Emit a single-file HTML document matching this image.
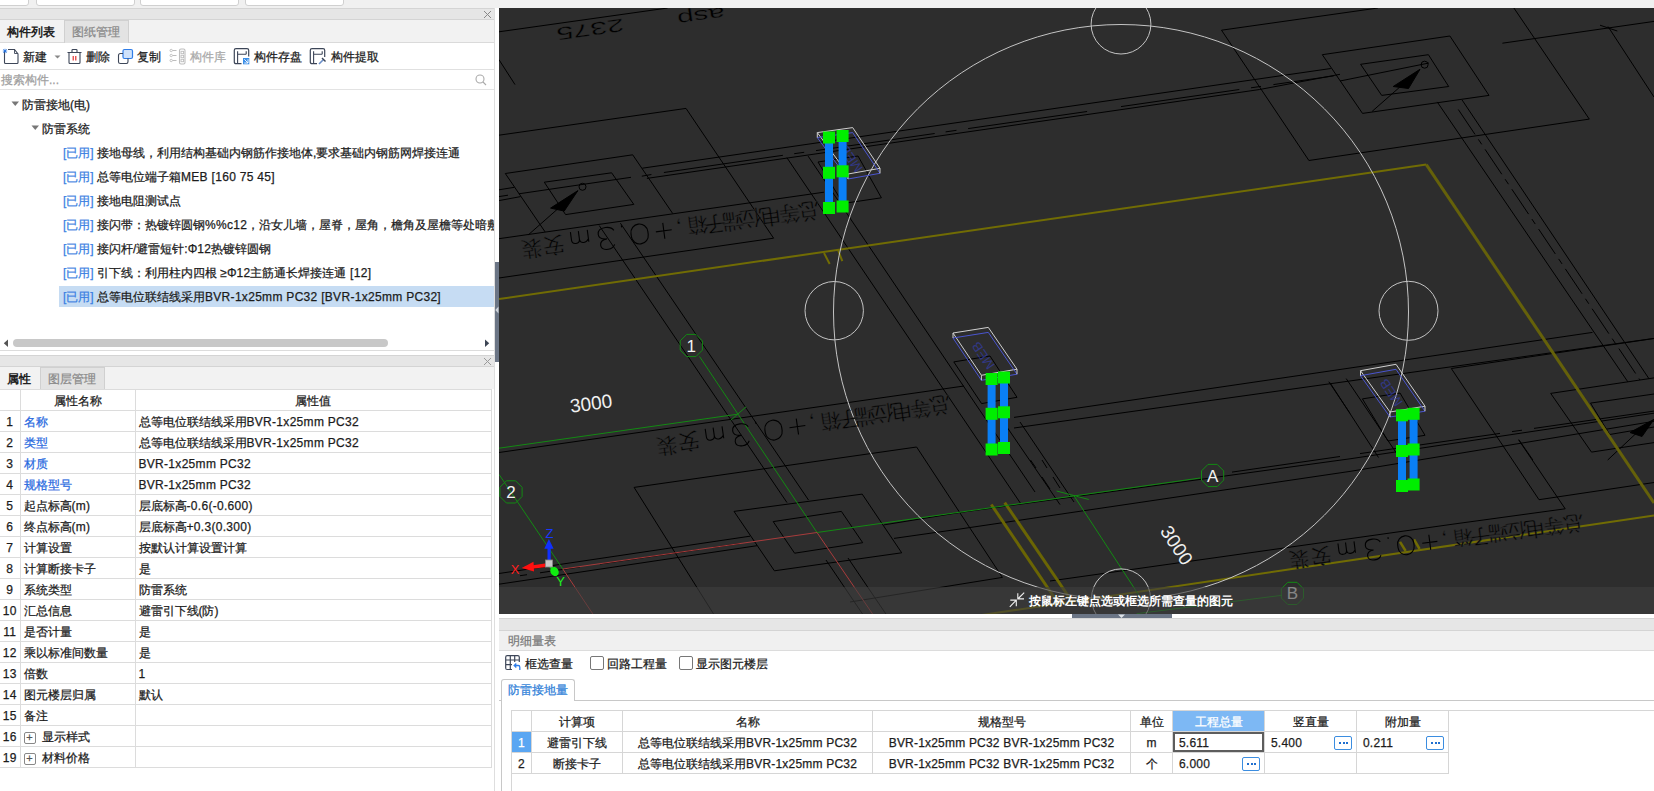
<!DOCTYPE html>
<html><head><meta charset="utf-8">
<style>
*{margin:0;padding:0;box-sizing:border-box}
html,body{width:1654px;height:791px;overflow:hidden;background:#f0f0f0;font-family:"Liberation Sans",sans-serif;font-size:12px;color:#1c1c1c}
.a{position:absolute}
.t{position:absolute;white-space:nowrap;line-height:14px;-webkit-text-stroke:0.25px currentColor}
#props td,#qty td{-webkit-text-stroke:0.25px currentColor}
.hbar{position:absolute;background:#e6e6e6;border-top:1px solid #d4d4d4;border-bottom:1px solid #d4d4d4}
.x{position:absolute;width:9px;height:9px}
.blue{color:#3a7fe2}
.gray{color:#999}
table{border-collapse:collapse;table-layout:fixed}
#props td{border:1px solid #dcdcdc;height:21px;padding:1px 0 0 3px;white-space:nowrap;overflow:hidden;font-size:12px;color:#1c1c1c;line-height:19px}
#qty td{border:1px solid #d6d6d6;height:21px;padding:1px 0 0 0;white-space:nowrap;overflow:hidden;font-size:12px;color:#1c1c1c;line-height:19px;text-align:center}
.dots{position:absolute;width:18px;height:14px;border:1px solid #3b8de0;border-radius:2px;background:#fff}
.dots i{position:absolute;top:5px;width:2px;height:2px;background:#1f6fd0}
.plus{position:absolute;margin-left:0;margin-top:4px;width:12px;height:12px;border:1px solid #888;border-radius:2px;font-size:11px;line-height:9px;text-align:center;color:#555}
#qty td.l{text-align:left;padding-left:6px;position:relative}
#qty td.l .dots{margin-top:0.5px}
#qty td.hsel{background:#7db8f4;color:#fff}
#qty td.nsel{background:#5aa6f2;color:#fff}
#qty td.cur{box-shadow:inset 0 0 0 2px #5d5d5d}
#props td.blue{color:#2a6ae0}
#props tr td:first-child{text-align:center;padding:1px 0 0 0;border-left:none}
.lt{letter-spacing:0.3px}
#props td,#qty td{padding-top:2px!important;line-height:18px!important}
#qty .lt{letter-spacing:0.2px}
</style></head><body>
<!-- top strip -->
<div class="a" style="left:0;top:0;width:1654px;height:8px;background:#f0f0f0"></div>
<div class="a" style="left:-4px;top:-5px;width:33px;height:11px;background:#fff;border:1px solid #d0d0d0;border-radius:3px"></div>
<div class="a" style="left:36px;top:-5px;width:99px;height:11px;background:#fff;border:1px solid #d0d0d0;border-radius:3px"></div>
<div class="a" style="left:140px;top:-5px;width:99px;height:11px;background:#fff;border:1px solid #d0d0d0;border-radius:3px"></div>
<div class="a" style="left:245px;top:-5px;width:99px;height:11px;background:#fff;border:1px solid #d0d0d0;border-radius:3px"></div>

<!-- LEFT PANEL TOP -->
<div class="hbar" style="left:0;top:8px;width:494px;height:12px"></div>
<svg class="x" style="left:483px;top:10px" viewBox="0 0 9 9"><path d="M1 1L8 8M8 1L1 8" stroke="#888" stroke-width="1"/></svg>
<div class="a" style="left:0;top:20px;width:494px;height:23px;background:#f2f2f2;border-bottom:1px solid #dadada"></div>
<div class="t" style="left:7px;top:25px;font-weight:bold;color:#222;-webkit-text-stroke:0">构件列表</div>
<div class="a" style="left:64px;top:20px;width:65px;height:23px;background:#e3e3e3;border:1px solid #d0d0d0;border-bottom:none"></div>
<div class="t gray" style="left:72px;top:25px;color:#8a8a8a">图纸管理</div>
<!-- toolbar -->
<div class="a" style="left:0;top:43px;width:494px;height:27px;background:#fff;border-bottom:1px solid #e0e0e0;border-radius:0 0 0 0"></div>
<div class="t" style="left:23px;top:50px">新建</div>
<div class="t" style="left:86px;top:50px">删除</div>
<div class="t" style="left:137px;top:50px">复制</div>
<div class="t" style="left:190px;top:50px;color:#aaa">构件库</div>
<div class="t" style="left:254px;top:50px">构件存盘</div>
<div class="t" style="left:331px;top:50px">构件提取</div>
<!-- search -->
<div class="a" style="left:0;top:70px;width:494px;height:20px;background:#fff;border-bottom:1px solid #e3e3e3"></div>
<div class="t" style="left:1px;top:73px;color:#a0a0a0">搜索构件...</div>
<!-- tree -->
<div class="a" style="left:0;top:90px;width:494px;height:261px;background:#fff;border-bottom:1px solid #dcdcdc"></div>
<div class="a" style="left:59px;top:286px;width:435px;height:21px;background:#c6dcf3"></div>
<div class="t" style="left:22px;top:98px">防雷接地(电)</div>
<div class="t" style="left:42px;top:122px">防雷系统</div>
<div class="t" style="left:63px;top:146px"><span class="blue">[已用]</span> 接地母线，利用结构基础内钢筋作接地体,要求基础内钢筋网焊接连通</div>
<div class="t" style="left:63px;top:170px"><span class="blue">[已用]</span> 总等电位端子箱<span class="lt">MEB [160 75 45]</span></div>
<div class="t" style="left:63px;top:194px"><span class="blue">[已用]</span> 接地电阻测试点</div>
<div class="t" style="left:63px;top:218px"><span class="blue">[已用]</span> 接闪带：热镀锌圆钢<span class="lt">%%c12</span>，沿女儿墙，屋脊，屋角，檐角及屋檐等处暗敷</div>
<div class="t" style="left:63px;top:242px"><span class="blue">[已用]</span> 接闪杆/避雷短针:Φ<span class="lt">12</span>热镀锌圆钢</div>
<div class="t" style="left:63px;top:266px"><span class="blue">[已用]</span> 引下线：利用柱内四根 ≥Φ<span class="lt">12</span>主筋通长焊接连通<span class="lt"> [12]</span></div>
<div class="t" style="left:63px;top:290px"><span class="blue">[已用]</span> 总等电位联结线采用<span class="lt">BVR-1x25mm PC32 [BVR-1x25mm PC32]</span></div>
<!-- h scrollbar -->
<div class="a" style="left:13px;top:339px;width:375px;height:8px;background:#c8c8c8;border-radius:4px"></div>

<!-- LEFT PANEL BOTTOM -->
<div class="a" style="left:0;top:351px;width:494px;height:4px;background:#fff"></div>
<div class="hbar" style="left:0;top:355px;width:494px;height:12px"></div>
<svg class="x" style="left:483px;top:357px" viewBox="0 0 9 9"><path d="M1 1L8 8M8 1L1 8" stroke="#999" stroke-width="1"/></svg>
<div class="a" style="left:0;top:367px;width:494px;height:23px;background:#f2f2f2;border-bottom:1px solid #dadada"></div>
<div class="t" style="left:7px;top:372px;font-weight:bold;color:#222;-webkit-text-stroke:0">属性</div>
<div class="a" style="left:40px;top:367px;width:65px;height:22px;background:#e3e3e3;border:1px solid #d0d0d0;border-bottom:none"></div>
<div class="t" style="left:48px;top:372px;color:#8a8a8a">图层管理</div>
<div class="a" style="left:0;top:389px;width:494px;height:402px;background:#fff"></div>

<table id="props" class="a" style="left:0;top:389px;width:491px"><colgroup><col style="width:20px"><col style="width:115px"><col style="width:356px"></colgroup><tr><td></td><td style="text-align:center;padding:1px 0 0 0">属性名称</td><td style="text-align:center;padding:1px 0 0 0">属性值</td></tr><tr><td><span class="lt">1</span></td><td class="blue">名称</td><td>总等电位联结线采用<span class="lt">BVR-1x25mm PC32</span></td></tr><tr><td><span class="lt">2</span></td><td class="blue">类型</td><td>总等电位联结线采用<span class="lt">BVR-1x25mm PC32</span></td></tr><tr><td><span class="lt">3</span></td><td class="blue">材质</td><td><span class="lt">BVR-1x25mm PC32</span></td></tr><tr><td><span class="lt">4</span></td><td class="blue">规格型号</td><td><span class="lt">BVR-1x25mm PC32</span></td></tr><tr><td><span class="lt">5</span></td><td>起点标高<span class="lt">(m)</span></td><td>层底标高<span class="lt">-0.6(-0.600)</span></td></tr><tr><td><span class="lt">6</span></td><td>终点标高<span class="lt">(m)</span></td><td>层底标高<span class="lt">+0.3(0.300)</span></td></tr><tr><td><span class="lt">7</span></td><td>计算设置</td><td>按默认计算设置计算</td></tr><tr><td><span class="lt">8</span></td><td>计算断接卡子</td><td>是</td></tr><tr><td><span class="lt">9</span></td><td>系统类型</td><td>防雷系统</td></tr><tr><td><span class="lt">10</span></td><td>汇总信息</td><td>避雷引下线(防)</td></tr><tr><td><span class="lt">11</span></td><td>是否计量</td><td>是</td></tr><tr><td><span class="lt">12</span></td><td>乘以标准间数量</td><td>是</td></tr><tr><td><span class="lt">13</span></td><td>倍数</td><td><span class="lt">1</span></td></tr><tr><td><span class="lt">14</span></td><td>图元楼层归属</td><td>默认</td></tr><tr><td><span class="lt">15</span></td><td>备注</td><td></td></tr><tr><td><span class="lt">16</span></td><td><span class="plus">+</span><span style="margin-left:18px">显示样式</span></td><td></td></tr><tr><td><span class="lt">19</span></td><td><span class="plus">+</span><span style="margin-left:18px">材料价格</span></td><td></td></tr></table>
<!-- splitter -->
<div class="a" style="left:494px;top:8px;width:5px;height:783px;background:#fff;border-left:1px solid #dedede"></div>
<div class="a" style="left:495px;top:262px;width:4px;height:100px;background:#6b7585"></div>

<!-- VIEWPORT -->
<div class="a" id="vp" style="left:499px;top:8px;width:1155px;height:606px;background:#2d2d2d;overflow:hidden"></div>
<!--CAD--><svg class="a" style="left:0;top:0" width="1654" height="791" viewBox="0 0 1654 791"><defs><clipPath id="vc"><rect x="499" y="8" width="1155" height="606"/></clipPath></defs><g clip-path="url(#vc)" font-family="Liberation Sans, sans-serif"><line x1="499.0" y1="31.8" x2="667.6" y2="8.0" stroke="#000000" stroke-width="1" />
<line x1="499.0" y1="59.7" x2="515.0" y2="84.6" stroke="#000000" stroke-width="1" />
<polyline points="499.0,135.2 686.0,108.4 773.6,238.2" stroke="#000000" stroke-width="1" fill="none" />
<polyline points="545.1,231.9 505.3,173.5 632.7,154.8 672.7,213.5" stroke="#000000" stroke-width="1" fill="none" />
<polygon points="544.3,182.2 611.6,172.8 633.8,204.4 565.6,214.6" stroke="#000000" stroke-width="1" fill="none" />
<line x1="528.6" y1="234.6" x2="578.0" y2="191.0" stroke="#000000" stroke-width="1" />
<polygon points="550.6,208.1 577.9,190.6 564.2,211.1" stroke="#000000" stroke-width="1" fill="#000000" />
<circle cx="582.5" cy="186.8" r="3.5" stroke="#000000" stroke-width="1" fill="none"/>
<line x1="499.0" y1="189.8" x2="514.4" y2="187.3" stroke="#000000" stroke-width="1" />
<line x1="642.3" y1="168.2" x2="1330.8" y2="68.5" stroke="#000000" stroke-width="1" />
<line x1="499.0" y1="200.6" x2="520.6" y2="196.6" stroke="#000000" stroke-width="1" />
<polyline points="646.9,178.4 1100.0,112.7 1259.7,89.5 1340.0,74.3" stroke="#000000" stroke-width="1" fill="none" />
<line x1="518.9" y1="193.8" x2="631.0" y2="177.3" stroke="#000000" stroke-width="1" />
<line x1="641.8" y1="176.2" x2="651.4" y2="174.5" stroke="#000000" stroke-width="1" />
<line x1="499.0" y1="196.6" x2="508.0" y2="195.2" stroke="#000000" stroke-width="1" />
<line x1="663.9" y1="172.5" x2="782.9" y2="155.3" stroke="#000000" stroke-width="1" />
<line x1="794.2" y1="153.7" x2="804.2" y2="152.3" stroke="#000000" stroke-width="1" />
<line x1="816.0" y1="150.6" x2="934.7" y2="133.5" stroke="#000000" stroke-width="1" />
<line x1="945.6" y1="131.9" x2="956.5" y2="130.3" stroke="#000000" stroke-width="1" />
<line x1="968.1" y1="128.6" x2="1087.1" y2="111.5" stroke="#000000" stroke-width="1" />
<line x1="1121.0" y1="106.6" x2="1239.3" y2="89.5" stroke="#000000" stroke-width="1" />
<line x1="1251.0" y1="87.8" x2="1261.0" y2="86.4" stroke="#000000" stroke-width="1" />
<line x1="1273.4" y1="84.6" x2="1333.7" y2="75.9" stroke="#000000" stroke-width="1" />
<line x1="499.0" y1="238.7" x2="824.0" y2="192.2" stroke="#000000" stroke-width="1" />
<line x1="499.0" y1="278.0" x2="773.6" y2="238.2" stroke="#000000" stroke-width="1" />
<polygon points="818.0,162.0 858.0,156.0 881.4,197.8 843.0,203.5" stroke="#000000" stroke-width="1" fill="none" />
<line x1="786.9" y1="157.7" x2="1020.7" y2="503.6" stroke="#000000" stroke-width="1" />
<line x1="808.1" y1="156.1" x2="1035.0" y2="492.0" stroke="#000000" stroke-width="1" />
<line x1="1006.0" y1="425.7" x2="1060.0" y2="504.6" stroke="#000000" stroke-width="1" />
<line x1="1020.0" y1="422.0" x2="1074.0" y2="502.0" stroke="#000000" stroke-width="1" />
<line x1="1030.5" y1="460.0" x2="1036.0" y2="468.0" stroke="#000000" stroke-width="1" />
<line x1="1042.0" y1="477.0" x2="1050.0" y2="489.0" stroke="#000000" stroke-width="1" />
<line x1="1042.0" y1="460.0" x2="1047.0" y2="468.0" stroke="#000000" stroke-width="1" />
<line x1="1053.0" y1="477.0" x2="1060.0" y2="488.0" stroke="#000000" stroke-width="1" />
<line x1="599.2" y1="225.5" x2="787.0" y2="502.6" stroke="#000000" stroke-width="1" />
<line x1="620.4" y1="223.2" x2="808.5" y2="500.0" stroke="#000000" stroke-width="1" />
<line x1="499.0" y1="452.5" x2="964.0" y2="386.0" stroke="#000000" stroke-width="1" />
<polyline points="713.6,614.0 634.1,487.4 916.6,447.0 1002.4,577.4 850.0,602.0" stroke="#000000" stroke-width="1" fill="none" />
<polygon points="734.0,511.4 862.2,494.1 901.7,552.8 774.4,570.8" stroke="#000000" stroke-width="1" fill="none" />
<polygon points="773.2,521.6 841.4,511.4 862.7,542.7 794.6,553.2" stroke="#000000" stroke-width="1" fill="none" />
<line x1="499.0" y1="573.5" x2="750.0" y2="536.2" stroke="#000000" stroke-width="1" />
<polyline points="883.9,524.9 960.0,512.5 1350.0,458.8 1654.0,413.2" stroke="#000000" stroke-width="1" fill="none" />
<line x1="499.0" y1="584.2" x2="757.0" y2="545.7" stroke="#000000" stroke-width="1" />
<polyline points="894.0,538.4 960.0,529.0 1350.0,471.4 1654.0,421.3" stroke="#000000" stroke-width="1" fill="none" />
<line x1="520.0" y1="575.7" x2="527.0" y2="574.7" stroke="#000000" stroke-width="1" />
<line x1="540.0" y1="572.8" x2="580.0" y2="566.9" stroke="#000000" stroke-width="1" />
<line x1="600.0" y1="564.0" x2="700.0" y2="549.4" stroke="#000000" stroke-width="1" />
<line x1="712.0" y1="547.6" x2="740.0" y2="543.5" stroke="#000000" stroke-width="1" />
<line x1="1232.0" y1="472.1" x2="1340.0" y2="456.5" stroke="#000000" stroke-width="1" />
<line x1="1360.0" y1="453.6" x2="1500.0" y2="433.4" stroke="#000000" stroke-width="1" />
<line x1="1512.0" y1="431.6" x2="1522.0" y2="430.2" stroke="#000000" stroke-width="1" />
<line x1="1534.0" y1="428.4" x2="1654.0" y2="411.1" stroke="#000000" stroke-width="1" />
<line x1="826.0" y1="560.0" x2="870.0" y2="625.0" stroke="#000000" stroke-width="1" />
<line x1="848.0" y1="558.0" x2="892.0" y2="623.0" stroke="#000000" stroke-width="1" />
<line x1="1014.0" y1="417.4" x2="1592.5" y2="332.4" stroke="#000000" stroke-width="1" />
<line x1="1014.0" y1="428.0" x2="1654.0" y2="338.4" stroke="#000000" stroke-width="1" />
<line x1="1330.0" y1="382.7" x2="1378.5" y2="457.5" stroke="#000000" stroke-width="1" />
<line x1="1346.2" y1="378.6" x2="1396.7" y2="453.5" stroke="#000000" stroke-width="1" />
<line x1="1451.3" y1="368.5" x2="1539.0" y2="499.7" stroke="#000000" stroke-width="1" />
<polyline points="1451.3,368.5 1654.0,338.5" stroke="#000000" stroke-width="1" fill="none" />
<polyline points="1539.0,499.7 1654.0,482.5" stroke="#000000" stroke-width="1" fill="none" />
<polyline points="1518.7,440.0 1565.2,508.8 1454.0,524.0 1050.0,581.0" stroke="#000000" stroke-width="1" fill="none" />
<line x1="1328.8" y1="381.7" x2="1350.0" y2="413.3" stroke="#000000" stroke-width="1" />
<polyline points="1377.9,8.0 1221.5,30.2 1308.9,160.5 1589.3,119.1 1513.9,8.0" stroke="#000000" stroke-width="1" fill="none" />
<polygon points="1322.3,54.7 1449.9,36.0 1489.0,95.4 1362.5,113.4" stroke="#000000" stroke-width="1" fill="none" />
<polygon points="1360.6,64.3 1428.4,54.7 1448.7,86.5 1381.7,95.4" stroke="#000000" stroke-width="1" fill="none" />
<line x1="1372.1" y1="111.4" x2="1420.0" y2="69.3" stroke="#000000" stroke-width="1" />
<polygon points="1393.2,86.5 1420.0,69.3 1408.5,88.5" stroke="#000000" stroke-width="1" fill="#000000" />
<circle cx="1424.6" cy="64.7" r="3.5" stroke="#000000" stroke-width="1" fill="none"/>
<line x1="1340.0" y1="81.0" x2="1429.0" y2="63.0" stroke="#000000" stroke-width="1" />
<line x1="1437.2" y1="101.9" x2="1627.9" y2="381.9" stroke="#000000" stroke-width="1" />
<line x1="1462.1" y1="100.0" x2="1649.1" y2="378.9" stroke="#000000" stroke-width="1" />
<line x1="1458.3" y1="109.5" x2="1640.0" y2="380.0" stroke="#000000" stroke-width="1" stroke-dasharray="30 6 6 6"/>
<line x1="1502.4" y1="43.2" x2="1654.0" y2="21.4" stroke="#000000" stroke-width="1" />
<line x1="1608.0" y1="26.5" x2="1654.0" y2="97.0" stroke="#000000" stroke-width="1" />
<line x1="1600.0" y1="25.2" x2="1617.3" y2="31.0" stroke="#000000" stroke-width="1" />
<polyline points="1654.0,377.9 1550.7,393.4 1591.5,452.1 1654.0,442.6" stroke="#000000" stroke-width="1" fill="none" />
<polyline points="1654.0,394.0 1590.5,403.1 1609.7,434.5 1654.0,427.0" stroke="#000000" stroke-width="1" fill="none" />
<line x1="1607.7" y1="460.0" x2="1636.0" y2="433.5" stroke="#000000" stroke-width="1" />
<polygon points="1630.0,432.5 1654.0,419.3 1642.0,436.5" stroke="#000000" stroke-width="1" fill="#000000" />
<line x1="1518.7" y1="439.5" x2="1532.9" y2="460.0" stroke="#000000" stroke-width="1" />
<polygon points="953.8,361.9 990.0,356.0 1017.0,397.3 981.6,403.6" stroke="#000000" stroke-width="1" fill="none" />
<polygon points="1362.4,398.9 1400.0,393.0 1425.0,435.3 1388.0,441.0" stroke="#000000" stroke-width="1" fill="none" />
<line x1="499.0" y1="299.0" x2="1426.3" y2="164.6" stroke="#716c04" stroke-width="2" />
<line x1="1426.3" y1="164.6" x2="1654.0" y2="502.9" stroke="#65610a" stroke-width="3" />
<line x1="975.0" y1="616.0" x2="1654.0" y2="515.4" stroke="#716c04" stroke-width="2" />
<polyline points="824.0,253.0 829.7,264.0" stroke="#716c04" stroke-width="2" fill="none" />
<polyline points="838.0,250.0 842.3,261.2" stroke="#716c04" stroke-width="2" fill="none" />
<line x1="1400.0" y1="541.8" x2="1405.7" y2="551.0" stroke="#716c04" stroke-width="2.5" />
<line x1="1414.0" y1="539.5" x2="1419.6" y2="549.0" stroke="#716c04" stroke-width="2.5" />
<line x1="991.3" y1="504.5" x2="1058.0" y2="603.0" stroke="#6a6504" stroke-width="3" />
<line x1="1004.7" y1="502.6" x2="1073.0" y2="603.0" stroke="#6a6504" stroke-width="3" />
<line x1="499.0" y1="448.2" x2="737.0" y2="414.3" stroke="#138a13" stroke-width="1" />
<line x1="730.8" y1="420.2" x2="746.1" y2="406.8" stroke="#138a13" stroke-width="1" />
<line x1="699.5" y1="356.5" x2="817.0" y2="532.5" stroke="#138a13" stroke-width="1" />
<line x1="817.0" y1="532.5" x2="1200.0" y2="478.0" stroke="#138a13" stroke-width="1" />
<line x1="1073.6" y1="495.2" x2="1142.0" y2="600.0" stroke="#138a13" stroke-width="1" />
<line x1="1056.6" y1="491.0" x2="1088.8" y2="499.5" stroke="#138a13" stroke-width="1" />
<line x1="499.0" y1="474.4" x2="562.8" y2="569.0" stroke="#138a13" stroke-width="1" />
<line x1="1136.5" y1="613.7" x2="1282.0" y2="595.3" stroke="#138a13" stroke-width="1" />
<polygon points="702.4,350.1 695.9,356.6 686.7,356.6 680.2,350.1 680.2,340.9 686.7,334.4 695.9,334.4 702.4,340.9" stroke="#138a13" stroke-width="1" fill="none" />
<text x="691.3" y="351.5" fill="#f2f2f2" font-size="17" text-anchor="middle" font-family="Liberation Sans">1</text>
<polygon points="522.1,496.5 515.6,503.0 506.4,503.0 499.9,496.5 499.9,487.3 506.4,480.8 515.6,480.8 522.1,487.3" stroke="#138a13" stroke-width="1" fill="none" />
<text x="511" y="497.9" fill="#f2f2f2" font-size="17" text-anchor="middle" font-family="Liberation Sans">2</text>
<polygon points="1223.7,480.1 1217.2,486.6 1208.0,486.6 1201.5,480.1 1201.5,470.9 1208.0,464.4 1217.2,464.4 1223.7,470.9" stroke="#138a13" stroke-width="1" fill="none" />
<text x="1212.6" y="481.5" fill="#f2f2f2" font-size="17" text-anchor="middle" font-family="Liberation Sans">A</text>
<polygon points="1303.5,598.0 1297.0,604.5 1287.8,604.5 1281.3,598.0 1281.3,588.8 1287.8,582.3 1297.0,582.3 1303.5,588.8" stroke="#138a13" stroke-width="1" fill="none" />
<text x="1292.4" y="599.4" fill="#f2f2f2" font-size="17" text-anchor="middle" font-family="Liberation Sans">B</text>
<line x1="562.8" y1="569.0" x2="817.0" y2="532.5" stroke="#a83c3c" stroke-width="1" />
<line x1="817.0" y1="532.5" x2="872.6" y2="614.0" stroke="#a83c3c" stroke-width="1" />
<line x1="562.8" y1="569.0" x2="592.9" y2="614.0" stroke="#a83c3c" stroke-width="1" />
<rect x="547.5" y="547" width="3.2" height="14" fill="#1030ff"/>
<polygon points="544.3,548.8 553.6,548.8 548.9,539" fill="#1030ff"/>
<text x="549.5" y="538" fill="#1838ff" font-size="13" text-anchor="middle" font-family="Liberation Sans">Z</text>
<polygon points="546.5,563.3 533,565.2 533,568.8 546.5,567" fill="#ff1010"/>
<polygon points="521.7,567.9 533.5,561.7 534,571.5" fill="#ff1010"/>
<text x="515" y="574" fill="#ff2020" font-size="13" text-anchor="middle" font-family="Liberation Sans">X</text>
<path d="M549.5 565.5 L552 568" stroke="#10ee10" stroke-width="2.5"/><ellipse cx="554.5" cy="571.5" rx="4" ry="4.8" transform="rotate(-35 554.5 571.5)" fill="#10ee10"/>
<text x="560.5" y="585.5" fill="#20ee20" font-size="13" text-anchor="middle" font-family="Liberation Sans">Y</text>
<rect x="545.5" y="560" width="7" height="7" fill="#c8c8c8" stroke="#888" stroke-width="0.8"/>
<circle cx="1121" cy="312" r="287.5" stroke="#c4c4c4" stroke-width="1" fill="none"/>
<circle cx="1121" cy="24.1" r="29.9" stroke="#c4c4c4" stroke-width="1" fill="none"/>
<circle cx="834.2" cy="310.7" r="29.2" stroke="#c4c4c4" stroke-width="1" fill="none"/>
<circle cx="1408.5" cy="310.8" r="29.5" stroke="#c4c4c4" stroke-width="1" fill="none"/>
<circle cx="1121" cy="598.4" r="29.5" stroke="#c4c4c4" stroke-width="1" fill="none"/>
<text x="591" y="410" fill="#f0f0f0" font-size="19" text-anchor="middle" transform="rotate(-8 591 403)" font-family="Liberation Sans">3000</text>
<text x="1177" y="552" fill="#f0f0f0" font-size="19" text-anchor="middle" transform="rotate(57 1177 545)" font-family="Liberation Sans">3000</text>
<text x="590" y="28" fill="#000000" stroke="#2d2d2d" stroke-width="0.35" font-size="18" font-weight="100" text-anchor="middle" dominant-baseline="middle" textLength="68" lengthAdjust="spacingAndGlyphs" transform="rotate(172 590 28)">2375</text>
<text x="701" y="15" fill="#000000" stroke="#2d2d2d" stroke-width="0.35" font-size="18" font-weight="100" text-anchor="middle" dominant-baseline="middle" textLength="48" lengthAdjust="spacingAndGlyphs" transform="rotate(172 701 15)">asp</text>
<text x="0" y="0" fill="#000000" stroke="#2d2d2d" stroke-width="0.45" font-size="21.0" text-anchor="middle" dominant-baseline="central" transform="translate(808.8 211.6) rotate(172.45)">总</text>
<text x="0" y="0" fill="#000000" stroke="#2d2d2d" stroke-width="0.45" font-size="21.0" text-anchor="middle" dominant-baseline="central" transform="translate(789.5 214.2) rotate(172.45)">等</text>
<text x="0" y="0" fill="#000000" stroke="#2d2d2d" stroke-width="0.45" font-size="21.0" text-anchor="middle" dominant-baseline="central" transform="translate(769.2 216.9) rotate(172.45)">电</text>
<text x="0" y="0" fill="#000000" stroke="#2d2d2d" stroke-width="0.45" font-size="21.0" text-anchor="middle" dominant-baseline="central" transform="translate(750.8 219.3) rotate(172.45)">位</text>
<text x="0" y="0" fill="#000000" stroke="#2d2d2d" stroke-width="0.45" font-size="21.0" text-anchor="middle" dominant-baseline="central" transform="translate(732.4 221.7) rotate(172.45)">端</text>
<text x="0" y="0" fill="#000000" stroke="#2d2d2d" stroke-width="0.45" font-size="21.0" text-anchor="middle" dominant-baseline="central" transform="translate(715.0 224.0) rotate(172.45)">子</text>
<text x="0" y="0" fill="#000000" stroke="#2d2d2d" stroke-width="0.45" font-size="21.0" text-anchor="middle" dominant-baseline="central" transform="translate(697.6 226.3) rotate(172.45)">箱</text>
<text x="0" y="0" fill="#000000" stroke="#2d2d2d" stroke-width="0.45" font-size="21.0" text-anchor="middle" dominant-baseline="central" transform="translate(679.2 228.8) rotate(172.45)">，</text>
<g transform="translate(663.8 230.8) rotate(172.45) scale(1.000)" stroke="#000000" stroke-width="1.10"><path d="M-8 0H8M0 -8V8" fill="none"/></g>
<g transform="translate(639.6 234.0) rotate(172.45) scale(1.000)" stroke="#000000" stroke-width="1.10"><rect x="-8.5" y="-10" width="17" height="20" rx="8.5" fill="none"/></g>
<g transform="translate(622.8 236.3) rotate(172.45) scale(1.000)" stroke="#000000" stroke-width="1.10"><path d="M0 9V11" fill="none"/></g>
<g transform="translate(606.8 238.4) rotate(172.45) scale(1.000)" stroke="#000000" stroke-width="1.10"><path d="M-7 -7Q-5 -11 0 -11Q7 -11 7 -6Q7 -1 0 -0.5Q8 0 8 5Q8 11 0 11Q-6 11 -8 7" fill="none"/></g>
<g transform="translate(578.8 242.1) rotate(172.45) scale(1.000)" stroke="#000000" stroke-width="1.10"><path d="M-10 11V-1M-10 2Q-8 -1 -5 -1Q-1 -1 -1 3V11M-1 3Q-1 -1 3 -1Q7 -1 7 3V11" fill="none"/></g>
<text x="0" y="0" fill="#000000" stroke="#2d2d2d" stroke-width="0.45" font-size="21.0" text-anchor="middle" dominant-baseline="central" transform="translate(553.5 245.5) rotate(172.45)">安</text>
<text x="0" y="0" fill="#000000" stroke="#2d2d2d" stroke-width="0.45" font-size="21.0" text-anchor="middle" dominant-baseline="central" transform="translate(531.3 248.4) rotate(172.45)">装</text>
<text x="0" y="0" fill="#000000" stroke="#2d2d2d" stroke-width="0.45" font-size="21.0" text-anchor="middle" dominant-baseline="central" transform="translate(940.0 406.0) rotate(171.77)">总</text>
<text x="0" y="0" fill="#000000" stroke="#2d2d2d" stroke-width="0.45" font-size="21.0" text-anchor="middle" dominant-baseline="central" transform="translate(921.0 408.7) rotate(171.77)">等</text>
<text x="0" y="0" fill="#000000" stroke="#2d2d2d" stroke-width="0.45" font-size="21.0" text-anchor="middle" dominant-baseline="central" transform="translate(901.0 411.6) rotate(171.77)">电</text>
<text x="0" y="0" fill="#000000" stroke="#2d2d2d" stroke-width="0.45" font-size="21.0" text-anchor="middle" dominant-baseline="central" transform="translate(882.9 414.3) rotate(171.77)">位</text>
<text x="0" y="0" fill="#000000" stroke="#2d2d2d" stroke-width="0.45" font-size="21.0" text-anchor="middle" dominant-baseline="central" transform="translate(864.8 416.9) rotate(171.77)">端</text>
<text x="0" y="0" fill="#000000" stroke="#2d2d2d" stroke-width="0.45" font-size="21.0" text-anchor="middle" dominant-baseline="central" transform="translate(847.7 419.4) rotate(171.77)">子</text>
<text x="0" y="0" fill="#000000" stroke="#2d2d2d" stroke-width="0.45" font-size="21.0" text-anchor="middle" dominant-baseline="central" transform="translate(830.6 421.8) rotate(171.77)">箱</text>
<text x="0" y="0" fill="#000000" stroke="#2d2d2d" stroke-width="0.45" font-size="21.0" text-anchor="middle" dominant-baseline="central" transform="translate(812.5 424.4) rotate(171.77)">，</text>
<g transform="translate(797.4 426.6) rotate(171.77) scale(1.000)" stroke="#000000" stroke-width="1.10"><path d="M-8 0H8M0 -8V8" fill="none"/></g>
<g transform="translate(773.5 430.1) rotate(171.77) scale(1.000)" stroke="#000000" stroke-width="1.10"><rect x="-8.5" y="-10" width="17" height="20" rx="8.5" fill="none"/></g>
<g transform="translate(757.0 432.5) rotate(171.77) scale(1.000)" stroke="#000000" stroke-width="1.10"><path d="M0 9V11" fill="none"/></g>
<g transform="translate(741.3 434.8) rotate(171.77) scale(1.000)" stroke="#000000" stroke-width="1.10"><path d="M-7 -7Q-5 -11 0 -11Q7 -11 7 -6Q7 -1 0 -0.5Q8 0 8 5Q8 11 0 11Q-6 11 -8 7" fill="none"/></g>
<g transform="translate(713.7 438.7) rotate(171.77) scale(1.000)" stroke="#000000" stroke-width="1.10"><path d="M-10 11V-1M-10 2Q-8 -1 -5 -1Q-1 -1 -1 3V11M-1 3Q-1 -1 3 -1Q7 -1 7 3V11" fill="none"/></g>
<text x="0" y="0" fill="#000000" stroke="#2d2d2d" stroke-width="0.45" font-size="21.0" text-anchor="middle" dominant-baseline="central" transform="translate(688.8 442.3) rotate(171.77)">安</text>
<text x="0" y="0" fill="#000000" stroke="#2d2d2d" stroke-width="0.45" font-size="21.0" text-anchor="middle" dominant-baseline="central" transform="translate(667.0 445.5) rotate(171.77)">装</text>
<text x="0" y="0" fill="#000000" stroke="#2d2d2d" stroke-width="0.45" font-size="20.0" text-anchor="middle" dominant-baseline="central" transform="translate(1573.0 524.0) rotate(172.72)">总</text>
<text x="0" y="0" fill="#000000" stroke="#2d2d2d" stroke-width="0.45" font-size="20.0" text-anchor="middle" dominant-baseline="central" transform="translate(1553.9 526.4) rotate(172.72)">等</text>
<text x="0" y="0" fill="#000000" stroke="#2d2d2d" stroke-width="0.45" font-size="20.0" text-anchor="middle" dominant-baseline="central" transform="translate(1533.9 529.0) rotate(172.72)">电</text>
<text x="0" y="0" fill="#000000" stroke="#2d2d2d" stroke-width="0.45" font-size="20.0" text-anchor="middle" dominant-baseline="central" transform="translate(1515.7 531.3) rotate(172.72)">位</text>
<text x="0" y="0" fill="#000000" stroke="#2d2d2d" stroke-width="0.45" font-size="20.0" text-anchor="middle" dominant-baseline="central" transform="translate(1497.6 533.6) rotate(172.72)">端</text>
<text x="0" y="0" fill="#000000" stroke="#2d2d2d" stroke-width="0.45" font-size="20.0" text-anchor="middle" dominant-baseline="central" transform="translate(1480.4 535.8) rotate(172.72)">子</text>
<text x="0" y="0" fill="#000000" stroke="#2d2d2d" stroke-width="0.45" font-size="20.0" text-anchor="middle" dominant-baseline="central" transform="translate(1463.2 538.0) rotate(172.72)">箱</text>
<text x="0" y="0" fill="#000000" stroke="#2d2d2d" stroke-width="0.45" font-size="20.0" text-anchor="middle" dominant-baseline="central" transform="translate(1445.0 540.3) rotate(172.72)">，</text>
<g transform="translate(1429.8 542.3) rotate(172.72) scale(0.952)" stroke="#000000" stroke-width="1.16"><path d="M-8 0H8M0 -8V8" fill="none"/></g>
<g transform="translate(1405.9 545.3) rotate(172.72) scale(0.952)" stroke="#000000" stroke-width="1.16"><rect x="-8.5" y="-10" width="17" height="20" rx="8.5" fill="none"/></g>
<g transform="translate(1389.3 547.5) rotate(172.72) scale(0.952)" stroke="#000000" stroke-width="1.16"><path d="M0 9V11" fill="none"/></g>
<g transform="translate(1373.5 549.5) rotate(172.72) scale(0.952)" stroke="#000000" stroke-width="1.16"><path d="M-7 -7Q-5 -11 0 -11Q7 -11 7 -6Q7 -1 0 -0.5Q8 0 8 5Q8 11 0 11Q-6 11 -8 7" fill="none"/></g>
<g transform="translate(1345.9 553.0) rotate(172.72) scale(0.952)" stroke="#000000" stroke-width="1.16"><path d="M-10 11V-1M-10 2Q-8 -1 -5 -1Q-1 -1 -1 3V11M-1 3Q-1 -1 3 -1Q7 -1 7 3V11" fill="none"/></g>
<text x="0" y="0" fill="#000000" stroke="#2d2d2d" stroke-width="0.45" font-size="20.0" text-anchor="middle" dominant-baseline="central" transform="translate(1320.9 556.2) rotate(172.72)">安</text>
<text x="0" y="0" fill="#000000" stroke="#2d2d2d" stroke-width="0.45" font-size="20.0" text-anchor="middle" dominant-baseline="central" transform="translate(1299.0 559.0) rotate(172.72)">装</text>
<text x="852" y="158" fill="#3540c0" fill-opacity="0.6" font-size="13" font-weight="100" text-anchor="middle" dominant-baseline="middle" transform="rotate(236 852 158)" textLength="30" lengthAdjust="spacingAndGlyphs">MEB</text>
<text x="984" y="355" fill="#3540c0" fill-opacity="0.6" font-size="13" font-weight="100" text-anchor="middle" dominant-baseline="middle" transform="rotate(236 984 355)" textLength="30" lengthAdjust="spacingAndGlyphs">MEB</text>
<text x="1392" y="392" fill="#3540c0" fill-opacity="0.6" font-size="13" font-weight="100" text-anchor="middle" dominant-baseline="middle" transform="rotate(236 1392 392)" textLength="30" lengthAdjust="spacingAndGlyphs">MEB</text>
<polygon points="817.3,132.6 852.7,127.6 880.0,168.3 848.0,174.0" stroke="#d0d0d0" stroke-width="1" fill="none" />
<polygon points="817.3,137.6 852.7,132.6 880.0,173.3 848.0,179.0" stroke="#4a55d0" stroke-width="1" fill="none" />
<line x1="848.0" y1="174.0" x2="848.0" y2="179.0" stroke="#d0d0d0" stroke-width="1" />
<line x1="880.0" y1="168.3" x2="880.0" y2="173.3" stroke="#d0d0d0" stroke-width="1" />
<line x1="817.3" y1="132.6" x2="817.3" y2="137.6" stroke="#d0d0d0" stroke-width="1" />
<rect x="825" y="137.5" width="8" height="70.5" fill="#0a7ff5"/>
<rect x="838.6" y="135.5" width="8" height="70.5" fill="#0a7ff5"/>
<rect x="823" y="131.5" width="12" height="12" fill="#00ee00"/>
<rect x="836.6" y="130.0" width="12" height="12" fill="#00ee00"/>
<rect x="823" y="166.8" width="12" height="12" fill="#00ee00"/>
<rect x="836.6" y="165.3" width="12" height="12" fill="#00ee00"/>
<rect x="823" y="202" width="12" height="12" fill="#00ee00"/>
<rect x="836.6" y="200.5" width="12" height="12" fill="#00ee00"/>
<polygon points="953.0,333.0 988.3,327.4 1017.0,369.2 981.4,375.3" stroke="#d0d0d0" stroke-width="1" fill="none" />
<polygon points="953.0,338.0 988.3,332.4 1017.0,374.2 981.4,380.3" stroke="#4a55d0" stroke-width="1" fill="none" />
<line x1="981.4" y1="375.3" x2="981.4" y2="380.3" stroke="#d0d0d0" stroke-width="1" />
<line x1="1017.0" y1="369.2" x2="1017.0" y2="374.2" stroke="#d0d0d0" stroke-width="1" />
<line x1="953.0" y1="333.0" x2="953.0" y2="338.0" stroke="#d0d0d0" stroke-width="1" />
<rect x="987.6" y="379" width="8" height="70.5" fill="#0a7ff5"/>
<rect x="1000" y="377" width="8" height="70.5" fill="#0a7ff5"/>
<rect x="985.6" y="373" width="12" height="12" fill="#00ee00"/>
<rect x="998" y="371.5" width="12" height="12" fill="#00ee00"/>
<rect x="985.6" y="407.8" width="12" height="12" fill="#00ee00"/>
<rect x="998" y="406.3" width="12" height="12" fill="#00ee00"/>
<rect x="985.6" y="443.5" width="12" height="12" fill="#00ee00"/>
<rect x="998" y="442.0" width="12" height="12" fill="#00ee00"/>
<polygon points="1360.5,370.7 1396.0,364.3 1425.0,406.2 1390.0,412.0" stroke="#d0d0d0" stroke-width="1" fill="none" />
<polygon points="1360.5,375.7 1396.0,369.3 1425.0,411.2 1390.0,417.0" stroke="#4a55d0" stroke-width="1" fill="none" />
<line x1="1390.0" y1="412.0" x2="1390.0" y2="417.0" stroke="#d0d0d0" stroke-width="1" />
<line x1="1425.0" y1="406.2" x2="1425.0" y2="411.2" stroke="#d0d0d0" stroke-width="1" />
<line x1="1360.5" y1="370.7" x2="1360.5" y2="375.7" stroke="#d0d0d0" stroke-width="1" />
<rect x="1398" y="415.3" width="8" height="70.69999999999999" fill="#0a7ff5"/>
<rect x="1409.6" y="413.3" width="8" height="70.69999999999999" fill="#0a7ff5"/>
<rect x="1396" y="409.3" width="12" height="12" fill="#00ee00"/>
<rect x="1407.6" y="407.8" width="12" height="12" fill="#00ee00"/>
<rect x="1396" y="445" width="12" height="12" fill="#00ee00"/>
<rect x="1407.6" y="443.5" width="12" height="12" fill="#00ee00"/>
<rect x="1396" y="480" width="12" height="12" fill="#00ee00"/>
<rect x="1407.6" y="478.5" width="12" height="12" fill="#00ee00"/></g></svg><!--/CAD-->

<!-- BOTTOM PANEL -->
<div class="a" style="left:499px;top:614px;width:1155px;height:177px;background:#fff"></div>
<div class="hbar" style="left:499px;top:618px;width:1155px;height:13px"></div>
<div class="a" style="left:499px;top:631px;width:1155px;height:20px;background:#f0f0f0;border-bottom:1px solid #dcdcdc"></div>
<div class="t" style="left:508px;top:634px;color:#7a7a7a">明细量表</div>
<div class="t" style="left:525px;top:657px">框选查量</div>
<div class="a" style="left:590px;top:656px;width:14px;height:14px;border:1px solid #777;border-radius:2px;background:#fff"></div>
<div class="t" style="left:607px;top:657px">回路工程量</div>
<div class="a" style="left:679px;top:656px;width:14px;height:14px;border:1px solid #777;border-radius:2px;background:#fff"></div>
<div class="t" style="left:696px;top:657px">显示图元楼层</div>
<div class="a" style="left:499px;top:700px;width:1155px;height:1px;background:#c8c8c8"></div>
<div class="a" style="left:501px;top:679px;width:74px;height:22px;background:#fff;border:1px solid #c8c8c8;border-bottom:none;border-radius:3px 3px 0 0"></div>
<div class="t" style="left:508px;top:683px;color:#2f80d8">防雷接地量</div>
<div class="a" style="left:501px;top:700px;width:1px;height:91px;background:#c8c8c8"></div>

<div class="a" style="left:511px;top:710px;width:1143px;height:1px;background:#d6d6d6"></div>
<div class="a" style="left:511px;top:772px;width:1px;height:19px;background:#d6d6d6"></div>
<table id="qty" class="a" style="left:511px;top:710px;width:938px"><colgroup><col style="width:20px"><col style="width:91px"><col style="width:250px"><col style="width:258px"><col style="width:42px"><col style="width:92px"><col style="width:92px"><col style="width:92px"></colgroup><tr><td></td><td>计算项</td><td>名称</td><td>规格型号</td><td>单位</td><td class="hsel">工程总量</td><td>竖直量</td><td>附加量</td></tr><tr><td class="nsel"><span class="lt">1</span></td><td>避雷引下线</td><td>总等电位联结线采用<span class="lt">BVR-1x25mm PC32</span></td><td><span class="lt">BVR-1x25mm PC32 BVR-1x25mm PC32</span></td><td><span class="lt">m</span></td><td class="l cur"><span class="lt">5.611</span></td><td class="l"><span class="lt">5.400</span><span class="dots" style="right:4px;top:3px"><i style="left:4px"></i><i style="left:7.5px"></i><i style="left:11px"></i></span></td><td class="l"><span class="lt">0.211</span><span class="dots" style="right:4px;top:3px"><i style="left:4px"></i><i style="left:7.5px"></i><i style="left:11px"></i></span></td></tr><tr><td><span class="lt">2</span></td><td>断接卡子</td><td>总等电位联结线采用<span class="lt">BVR-1x25mm PC32</span></td><td><span class="lt">BVR-1x25mm PC32 BVR-1x25mm PC32</span></td><td>个</td><td class="l"><span class="lt">6.000</span><span class="dots" style="right:4px;top:3px"><i style="left:4px"></i><i style="left:7.5px"></i><i style="left:11px"></i></span></td><td class="l"></td><td class="l"></td></tr></table>

<!-- status bar -->
<div class="a" style="left:499px;top:587px;width:1155px;height:27px;background:rgba(62,62,62,0.6)"></div>
<svg class="a" style="left:1009px;top:592px" width="16" height="16" viewBox="0 0 16 16"><path d="M15.2 0.6L8.8 7M8.8 1.3V6.9H15M0.8 14.9L7.3 8.1M1.3 8.1H7.3V14.2" stroke="#f0f0f0" stroke-width="1.1" fill="none"/></svg>
<div class="t" style="left:1029px;top:594px;color:#fff;font-size:12px;font-weight:bold;-webkit-text-stroke:0">按鼠标左键点选或框选所需查量的图元</div>
<div class="a" style="left:1072px;top:614px;width:100px;height:4px;background:#6b7585"></div>
<svg class="a" style="left:1117px;top:614px" width="9" height="5" viewBox="0 0 9 5"><path d="M1 0.5H8L4.5 4Z" fill="#dfe3e8"/></svg>
<!-- tree triangles -->
<svg class="a" style="left:11px;top:101px" width="9" height="6"><path d="M0.5 0.5H8L4.25 5Z" fill="#777"/></svg>
<svg class="a" style="left:31px;top:125px" width="9" height="6"><path d="M0.5 0.5H8L4.25 5Z" fill="#777"/></svg>
<!-- scroll arrows -->
<svg class="a" style="left:3px;top:339px" width="6" height="9"><path d="M5 0.5V8L0.8 4.25Z" fill="#555"/></svg>
<svg class="a" style="left:484px;top:339px" width="6" height="9"><path d="M1 0.5V8L5.2 4.25Z" fill="#3d4555"/></svg>
<svg class="a" style="left:495px;top:306px" width="4" height="8"><path d="M3.5 0.5V7.5L0.3 4Z" fill="#cfd4db"/></svg>
<!-- toolbar icons -->
<svg class="a" style="left:2px;top:48px" width="18" height="17" viewBox="0 0 18 17"><path d="M2.5 3V14.5Q2.5 15.5 3.5 15.5H15Q16 15.5 16 14.5V6L12.5 1.5H6" fill="none" stroke="#3d4658" stroke-width="1.1"/><path d="M12.5 1.5V5.5H16" fill="none" stroke="#3d4658" stroke-width="0.9"/><path d="M1.3 1.3l3.4 3.4M4.7 1.3l-3.4 3.4M3 0.8v4.4M0.8 3h4.4" stroke="#1f6fe0" stroke-width="0.8"/></svg>
<svg class="a" style="left:54px;top:55px" width="7" height="4"><path d="M0.5 0.5H6.5L3.5 3.5Z" fill="#888"/></svg>
<svg class="a" style="left:66px;top:48px" width="17" height="17" viewBox="0 0 17 17"><path d="M1.5 4.5H15.5M6 4.5V2.2Q6 1.5 6.8 1.5H10.2Q11 1.5 11 2.2V4.5M3 4.5V14.5Q3 15.5 4 15.5H13Q14 15.5 14 14.5V4.5" fill="none" stroke="#3d4658" stroke-width="1.1"/><path d="M7.2 8V12.5M9.8 8V12.5" stroke="#e02020" stroke-width="1.1"/></svg>
<svg class="a" style="left:117px;top:48px" width="17" height="17" viewBox="0 0 17 17"><rect x="6" y="1.5" width="9.5" height="9" rx="1.5" fill="#cfe2fb" stroke="#2f7de8" stroke-width="1.2"/><path d="M6 5.5H3.5C2.5 5.5 1.5 6.5 1.5 7.5V14C1.5 15 2.5 15.5 3.5 15.5H9.5C10.5 15.5 11 14.5 11 13.5V10.5" fill="none" stroke="#3d4658" stroke-width="1.1"/></svg>
<svg class="a" style="left:169px;top:48px" width="17" height="17" viewBox="0 0 17 17"><rect x="10.5" y="1" width="5.5" height="15" rx="1.5" fill="none" stroke="#bdbdbd" stroke-width="1.1"/><rect x="12" y="3.3" width="2.6" height="2.4" fill="none" stroke="#bdbdbd" stroke-width="0.9"/><rect x="12" y="7.3" width="2.6" height="2.4" fill="none" stroke="#bdbdbd" stroke-width="0.9"/><rect x="12" y="11.3" width="2.6" height="2.4" fill="none" stroke="#bdbdbd" stroke-width="0.9"/><path d="M3.3 2.5H7.5M3.3 7.5H7.5M3.3 12.5H7.5" stroke="#bdbdbd" stroke-width="1"/><circle cx="2.2" cy="2.5" r="1.2" fill="#fff" stroke="#bdbdbd" stroke-width="0.9"/><circle cx="2.2" cy="7.5" r="1.2" fill="#fff" stroke="#bdbdbd" stroke-width="0.9"/><circle cx="2.2" cy="12.5" r="1.2" fill="#fff" stroke="#bdbdbd" stroke-width="0.9"/></svg>
<svg class="a" style="left:233px;top:48px" width="17" height="17" viewBox="0 0 17 17"><path d="M8.5 15.6H3Q1.3 15.6 1.3 14V2.2Q1.3 0.6 3 0.6H14Q15.7 0.6 15.7 2.2V8.5" fill="none" stroke="#3d4658" stroke-width="1.2"/><path d="M4.6 3.2V15.5M4.6 6.3H13.2M13.2 3.2V6.3" fill="none" stroke="#3d4658" stroke-width="1.1"/><rect x="10" y="10" width="6.3" height="6.3" fill="#3a8ee8"/><path d="M11.3 11.3L15 15M15 11.3V15H11.3" stroke="#fff" stroke-width="0.9" fill="none"/></svg>
<svg class="a" style="left:309px;top:48px" width="17" height="17" viewBox="0 0 17 17"><path d="M8 15.6H3Q1.3 15.6 1.3 14V2.2Q1.3 0.6 3 0.6H14Q15.7 0.6 15.7 2.2V9" fill="none" stroke="#3d4658" stroke-width="1.2"/><path d="M4.6 3.2V15.5M4.6 6.3H13.2M13.2 3.2V6.3" fill="none" stroke="#3d4658" stroke-width="1.1"/><path d="M10 16L14.5 11.5" stroke="#6a8ec8" stroke-width="1.6"/><path d="M13 10L16.5 13.5" stroke="#3d4658" stroke-width="1.4"/></svg>
<svg class="a" style="left:475px;top:74px" width="12" height="12" viewBox="0 0 12 12"><circle cx="5" cy="5" r="4" fill="none" stroke="#aaa" stroke-width="1.1"/><path d="M8 8L11 11" stroke="#aaa" stroke-width="1.1"/></svg>
<!-- 框选查量 icon -->
<svg class="a" style="left:505px;top:655px" width="16" height="16" viewBox="0 0 16 16"><path d="M7 14.5H2.2Q0.7 14.5 0.7 13V2.2Q0.7 0.7 2.2 0.7H12.8Q14.3 0.7 14.3 2.2V7M0.7 5H14.3M0.7 9.7H7M5.3 0.7V14.5M9.7 0.7V7" fill="none" stroke="#3d4658" stroke-width="1.2"/><path d="M14.8 15V12.2Q14.8 10.5 13.2 10.5H9.3M11.3 8.5L9.2 10.5L11.3 12.5" fill="none" stroke="#2f7de8" stroke-width="1.3"/></svg>

</body></html>
